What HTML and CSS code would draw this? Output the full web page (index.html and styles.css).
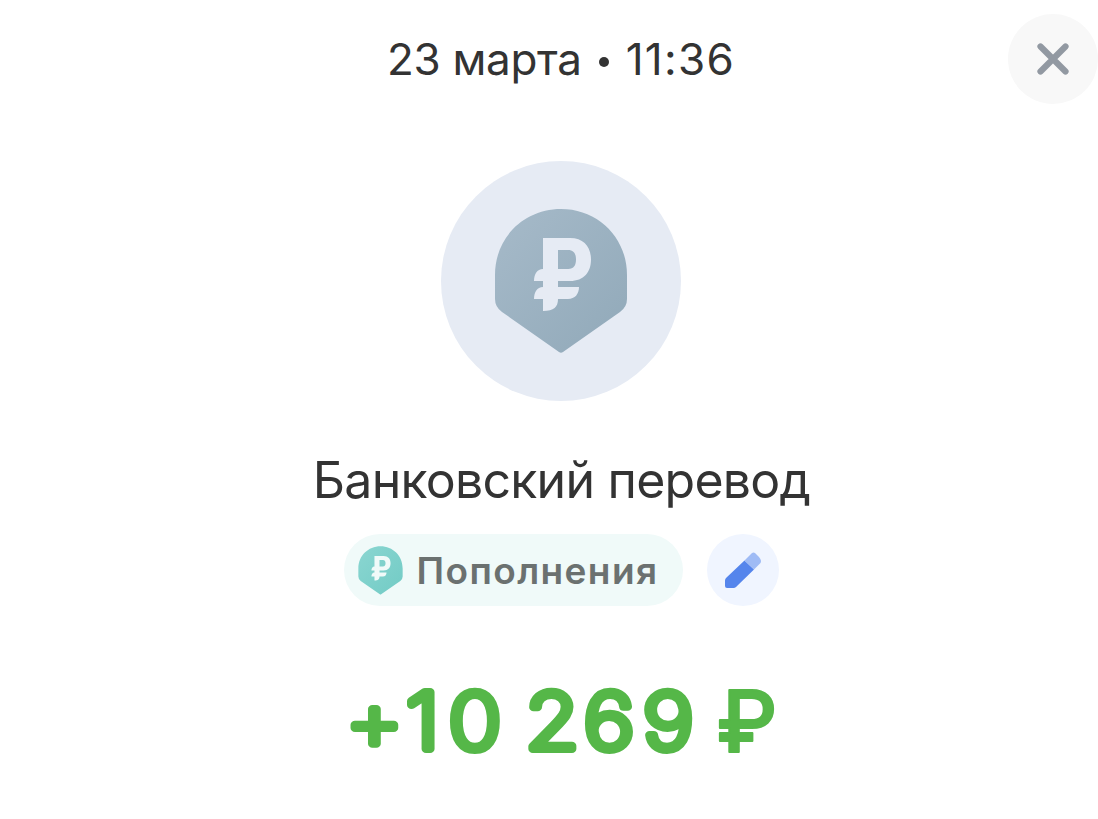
FILE: index.html
```
<!DOCTYPE html>
<html lang="ru">
<head>
    <meta charset="UTF-8">
    <meta name="viewport" content="width=device-width, initial-scale=1.0">
    <title>Банковский перевод</title>
    <link rel="stylesheet" href="styles.css">
</head>
<body>

    <header class="header">
        <div class="date"><span class="day">23 марта</span><span class="dot"></span><span class="time">11:36</span></div>
        <button class="close" aria-label="Закрыть">
            <svg width="32" height="32" viewBox="0 0 32 32">
                <path d="M3.5 3.5 28.5 28.5M28.5 3.5 3.5 28.5"/>
            </svg>
        </button>
    </header>

    <main class="operation">
        <div class="logo">
            <svg width="134" height="146" viewBox="0 0 134 146">
                <defs>
                    <linearGradient id="shield" x1="0" y1="0" x2="1" y2="1">
                        <stop offset="0" stop-color="#a6bac9"/>
                        <stop offset="1" stop-color="#91a9b9"/>
                    </linearGradient>
                    <path id="shieldShape" d="M67 1C103.500 1 133 29 133 67V91Q133 99 126 104L69 144Q67 145.500 65 144L8 104Q1 99 1 91V67C1 29 30.500 1 67 1Z"/>
                    <path id="ruble" fill-rule="evenodd" d="M49 30H76C90 30 97 39 97 51.500C97 64 90 73 76 73H64V79H85C85 86 81 91 74 91H64C64 99 60 103 49 103V91H40C40 84 43 79 49 79V73H40C40 66 43 61 49 61ZM64 42V61H74C80 61 82 57 82 51.500C82 46 80 42 74 42Z"/>
                </defs>
                <use href="#shieldShape" fill="url(#shield)"/>
                <use href="#ruble" fill="#e6ebf4"/>
            </svg>
        </div>

        <h1 class="title">Банковский перевод</h1>

        <div class="tags">
            <div class="category">
                <svg width="45" height="49" viewBox="0 0 134 146">
                    <defs>
                        <linearGradient id="mint" x1="0" y1="0" x2="1" y2="1">
                            <stop offset="0" stop-color="#8ad6d1"/>
                            <stop offset="1" stop-color="#72cbc5"/>
                        </linearGradient>
                    </defs>
                    <use href="#shieldShape" fill="url(#mint)"/>
                    <use href="#ruble" fill="#f0faf9"/>
                </svg>
                <span class="category-name">Пополнения</span>
            </div>
            <button class="edit" aria-label="Изменить">
                <svg width="38" height="38" viewBox="0 0 38 38">
                    <path fill="#5585ec" d="M20.500 9.500 30 18.500 12 36Q11 37 9.500 37H3Q1 37 1 35V29.500Q1 28 2 27Z"/>
                    <path fill="#9fbbf5" d="M20.500 9.500 28 2Q29.500 .8 31 2L35 6Q38 9.500 36.500 12L30 18.500Z"/>
                </svg>
            </button>
        </div>

        <!-- svg text, because the digits need rounded stroke ends -->
        <svg class="amount" width="440" height="90" viewBox="0 0 440 90">
            <text transform="scale(1.12 1)" y="74"><tspan class="plus" x="4">+</tspan><tspan x="58">1</tspan><tspan x="96">0</tspan> <tspan x="164.500">2</tspan><tspan x="216.500">6</tspan><tspan x="269.500">9</tspan></text>
            <text class="currency" x="375.500" y="77">₽</text>
        </svg>
    </main>

</body>
</html>
```

FILE: styles.css
```
* {
    box-sizing: border-box;
}

body {
    margin: 0;
    padding-left: 24px;
    background-color: #fff;
    color: #333;
    font-family: Inter, "Liberation Sans", sans-serif;
}

button {
    display: flex;
    align-items: center;
    justify-content: center;
    padding: 0;
    border: none;
    border-radius: 50%;
    cursor: pointer;
}

.header {
    display: grid;
    grid-template-columns: 90px 1fr 90px;
    padding-top: 14px;
}

.date {
    grid-column: 2;
    display: flex;
    align-items: center;
    justify-content: center;
    height: 90px;
    font-size: 44px;
    line-height: 90px;
    white-space: nowrap;
}

.day {
    letter-spacing: -0.3px;
}

.time {
    letter-spacing: 1.3px;
}

.dot {
    width: 10px;
    height: 10px;
    margin: 5px 17px 0 17px;
    border-radius: 50%;
    background-color: #333;
}

.close {
    width: 90px;
    height: 90px;
    background-color: #f8f8f8;
}

.close path {
    stroke: #9299a2;
    stroke-width: 6.2;
    stroke-linecap: round;
}

.operation {
    display: flex;
    flex-direction: column;
    align-items: center;
}

.logo {
    display: flex;
    align-items: center;
    justify-content: center;
    width: 240px;
    height: 240px;
    margin-top: 57px;
    border-radius: 50%;
    background-color: #e6ebf4;
}

.title {
    margin: 49px 0 0;
    padding-left: 1px;
    font-size: 50px;
    font-weight: 400;
    letter-spacing: -0.75px;
    line-height: 60px;
    white-space: nowrap;
}

.tags {
    display: flex;
    gap: 24px;
    margin-top: 24px;
}

.category {
    display: flex;
    align-items: center;
    gap: 14px;
    width: 339px;
    height: 72px;
    padding-left: 14px;
    border-radius: 36px;
    background-color: #f0faf9;
}

.category-name {
    color: #6b7170;
    font-size: 37px;
    font-weight: 600;
    letter-spacing: 1.4px;
    white-space: nowrap;
}

.edit {
    width: 72px;
    height: 72px;
    background-color: #f0f5ff;
}

.amount {
    margin-top: 69px;
    overflow: visible;
}

.amount text {
    fill: #55b748;
    stroke: #55b748;
    stroke-width: 8;
    stroke-linejoin: round;
    font-size: 78px;
    font-weight: 200;
}

.amount .plus {
    font-size: 80px;
}

.amount .currency {
    stroke-width: 2;
    font-size: 85px;
    font-weight: 500;
}
```
